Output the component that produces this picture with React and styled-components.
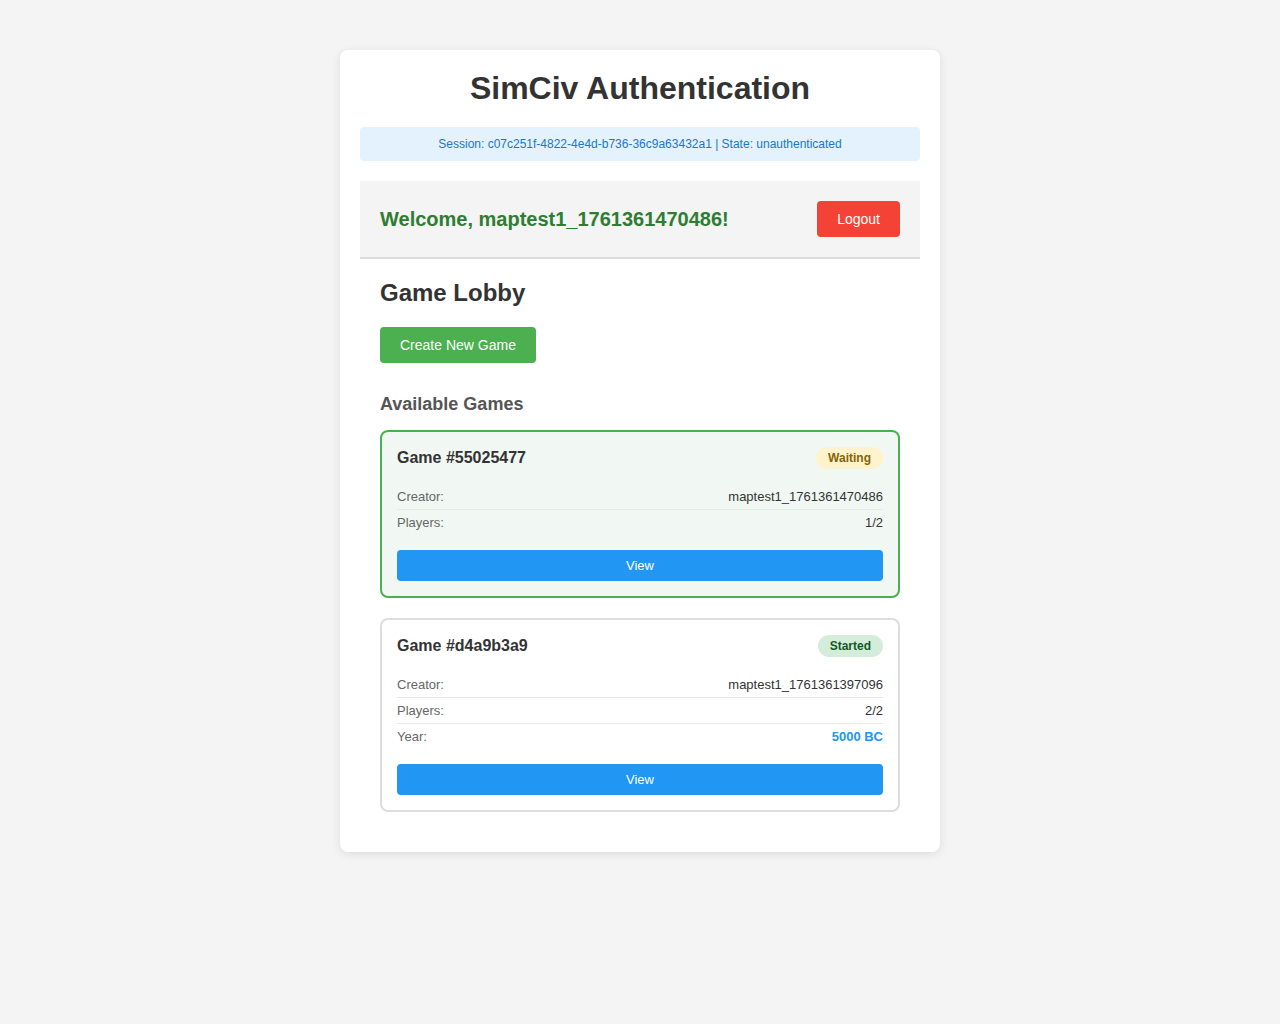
import React from 'react';
import styled, { createGlobalStyle } from 'styled-components';

const GlobalStyle = createGlobalStyle`
    body {
        margin: 0;
        background: #f4f4f4;
        font-family: "Liberation Sans", Arial, sans-serif;
        color: #333;
    }
`;

const Page = styled.div`
    padding: 50px 0;
    display: flex;
    justify-content: center;
`;

const Container = styled.div`
    width: 600px;
    box-sizing: border-box;
    padding: 20px;
    background: #fff;
    border-radius: 8px;
    box-shadow: 0 2px 10px rgba(0, 0, 0, 0.1);
`;

const Title = styled.h1`
    margin: 0 0 20px;
    font-size: 32px;
    line-height: 37px;
    text-align: center;
    color: #333;
`;

const SessionInfo = styled.div`
    background: #e3f2fd;
    color: #1976d2;
    font-size: 12px;
    line-height: 14px;
    padding: 10px;
    text-align: center;
    border-radius: 4px;
    margin-bottom: 20px;
`;

const WelcomeBar = styled.div`
    display: flex;
    justify-content: space-between;
    align-items: center;
    padding: 20px;
    background: #f4f4f4;
    border-bottom: 2px solid #ddd;
`;

const WelcomeText = styled.h2`
    margin: 0;
    font-size: 20px;
    color: #2e7d32;
`;

const Button = styled.button`
    border: none;
    border-radius: 4px;
    cursor: pointer;
    font-family: inherit;
    color: #fff;
    font-size: ${p => p.$small ? '13px' : '14px'};
    line-height: ${p => p.$small ? '15px' : '16px'};
    padding: ${p => p.$small ? '8px' : '10px 20px'};
    background: ${p => p.$color};
    width: ${p => p.$block ? '100%' : 'auto'};
    display: block;
`;

const Lobby = styled.div`
    padding: 20px;
`;

const LobbyTitle = styled.h2`
    margin: 0 0 20px;
    font-size: 24px;
    line-height: 28px;
    color: #333;
`;

const SubTitle = styled.h3`
    margin: 31px 0 15px;
    font-size: 18px;
    line-height: 21px;
    color: #555;
`;

const GameList = styled.div`
    display: flex;
    flex-direction: column;
    gap: 20px;
`;

const GameCard = styled.div`
    border: 2px solid ${p => p.$active ? '#4caf50' : '#ddd'};
    background: ${p => p.$active ? '#f1f8f4' : '#fff'};
    border-radius: 8px;
    padding: 15px;
`;

const CardHeader = styled.div`
    display: flex;
    justify-content: space-between;
    align-items: center;
    margin-bottom: 15px;
`;

const GameName = styled.div`
    font-size: 16px;
    font-weight: bold;
    color: #333;
`;

const Badge = styled.span`
    font-size: 12px;
    font-weight: bold;
    line-height: 14px;
    padding: 4px 12px;
    border-radius: 12px;
    background: ${p => p.$status === 'waiting' ? '#fff3cd' : '#d4edda'};
    color: ${p => p.$status === 'waiting' ? '#856404' : '#155724'};
`;

const InfoList = styled.div`
    display: flex;
    flex-direction: column;
`;

const InfoRow = styled.div`
    display: flex;
    justify-content: space-between;
    font-size: 13px;
    line-height: 15px;
    padding: 5px 0;
    border-bottom: 1px solid #e8e8e8;

    &:last-child {
        border-bottom: none;
    }
`;

const Label = styled.span`
    color: #666;
`;

const Value = styled.span`
    color: ${p => p.$highlight ? '#2196f3' : '#333'};
    font-weight: ${p => p.$highlight ? 'bold' : 'normal'};
`;

const Actions = styled.div`
    margin-top: 15px;
`;

const games = [
    {
        id: '55025477',
        status: 'waiting',
        creator: 'maptest1_1761361470486',
        players: '1/2',
    },
    {
        id: 'd4a9b3a9',
        status: 'started',
        creator: 'maptest1_1761361397096',
        players: '2/2',
        year: '5000 BC',
    },
];

export default function App() {
    return (
        <>
            <GlobalStyle />
            <Page>
                <Container>
                    <Title>SimCiv Authentication</Title>
                    <SessionInfo>
                        Session: c07c251f-4822-4e4d-b736-36c9a63432a1 | State: unauthenticated
                    </SessionInfo>
                    <WelcomeBar>
                        <WelcomeText>Welcome, maptest1_1761361470486!</WelcomeText>
                        <Button $color="#f44336">Logout</Button>
                    </WelcomeBar>
                    <Lobby>
                        <LobbyTitle>Game Lobby</LobbyTitle>
                        <Button $color="#4caf50">Create New Game</Button>
                        <SubTitle>Available Games</SubTitle>
                        <GameList>
                            {games.map(g => (
                                <GameCard key={g.id} $active={g.status === 'waiting'}>
                                    <CardHeader>
                                        <GameName>Game #{g.id}</GameName>
                                        <Badge $status={g.status}>
                                            {g.status === 'waiting' ? 'Waiting' : 'Started'}
                                        </Badge>
                                    </CardHeader>
                                    <InfoList>
                                        <InfoRow>
                                            <Label>Creator:</Label>
                                            <Value>{g.creator}</Value>
                                        </InfoRow>
                                        <InfoRow>
                                            <Label>Players:</Label>
                                            <Value>{g.players}</Value>
                                        </InfoRow>
                                        {g.year && (
                                            <InfoRow>
                                                <Label>Year:</Label>
                                                <Value $highlight>{g.year}</Value>
                                            </InfoRow>
                                        )}
                                    </InfoList>
                                    <Actions>
                                        <Button $color="#2196f3" $small $block>View</Button>
                                    </Actions>
                                </GameCard>
                            ))}
                        </GameList>
                    </Lobby>
                </Container>
            </Page>
        </>
    );
}
